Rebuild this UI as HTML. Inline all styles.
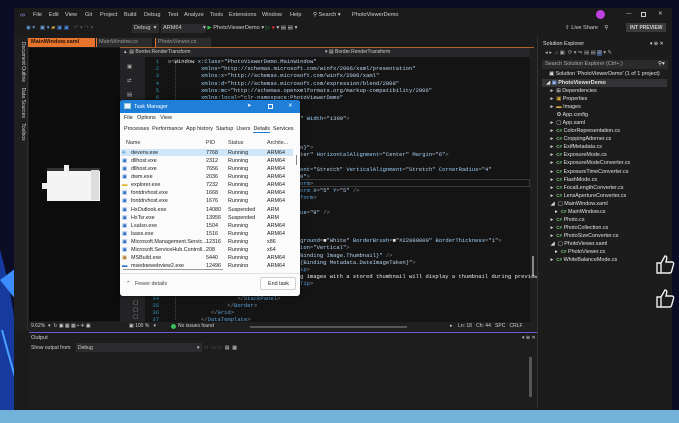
<!DOCTYPE html>
<html><head><meta charset="utf-8">
<style>
*{margin:0;padding:0;box-sizing:border-box}
body{width:679px;height:423px;overflow:hidden;background:#0b0d26;font-family:"Liberation Sans",sans-serif;position:relative;color:#ddd}
.a{position:absolute;white-space:nowrap}
.ui{font-size:5.6px;color:#d0d0d0}
.code{font-family:"Liberation Mono",monospace;font-size:5.5px;line-height:7px}
.t{color:#5a9fd8}.at{color:#9ccff5}.v{color:#b9d3ee}.p{color:#8a8a8a}.w{color:#e8e8e8}
.ln{color:#2b91af;font-family:"Liberation Mono",monospace;font-size:5.5px;text-align:right;width:14px}
.tm{font-size:5.4px;color:#222}
.se{font-size:5.4px;color:#e0e0e0}
.cs{color:#7cc77c;font-size:4.6px;font-weight:bold}
</style></head><body>
<!-- wallpaper swirl left -->
<svg class="a" style="left:0;top:0" width="16" height="423"><path d="M0 250 Q14 300 16 340 L16 410 L0 410Z" fill="#1b4fd0" opacity=".7"/><path d="M0 280 L16 268 L16 300 Z" fill="#3b8cff"/><path d="M2 330 Q10 360 16 380" stroke="#4aa0ff" stroke-width="2" fill="none"/></svg>
<!-- VS window -->
<div class="a" style="left:14px;top:8px;width:658px;height:402px;background:#1b1b1c"></div>
<!-- menu -->
<div class="a ui" style="left:20px;top:12px;color:#9b8ce8;font-size:7px">∞</div>
<div class="a ui" style="left:33px;top:12px">File</div>
<div class="a ui" style="left:49px;top:12px">Edit</div>
<div class="a ui" style="left:65px;top:12px">View</div>
<div class="a ui" style="left:85px;top:12px">Git</div>
<div class="a ui" style="left:100px;top:12px">Project</div>
<div class="a ui" style="left:124px;top:12px">Build</div>
<div class="a ui" style="left:144px;top:12px">Debug</div>
<div class="a ui" style="left:168px;top:12px">Test</div>
<div class="a ui" style="left:184px;top:12px">Analyze</div>
<div class="a ui" style="left:210px;top:12px">Tools</div>
<div class="a ui" style="left:229px;top:12px">Extensions</div>
<div class="a ui" style="left:262px;top:12px">Window</div>
<div class="a ui" style="left:290px;top:12px">Help</div>
<div class="a ui" style="left:313px;top:12px">⚲ Search ▾</div>
<div class="a ui" style="left:352px;top:12px">PhotoViewerDemo</div>
<div class="a" style="left:596px;top:10px;width:9px;height:9px;border-radius:50%;background:#c040e0"></div>
<div class="a ui" style="left:626px;top:11px">—</div>
<div class="a" style="left:641px;top:12px;width:5px;height:5px;border:1px solid #ccc"></div>
<div class="a ui" style="left:658px;top:11px">✕</div>
<!-- toolbar -->
<div class="a ui" style="left:26px;top:25px;color:#6aa0e0">◉ ▾ &nbsp; ▣ ▾ <span style="color:#d8a040">▰</span> <span style="color:#4a8ae0">▣ ▣</span> &nbsp; <span style="color:#555">↶ ▾ ↷ ▾</span></div>
<div class="a" style="left:132px;top:24px;width:27px;height:9px;background:#2c2c2e"></div>
<div class="a ui" style="left:134px;top:25px">Debug &nbsp;▾</div>
<div class="a" style="left:161px;top:24px;width:45px;height:9px;background:#2c2c2e"></div>
<div class="a ui" style="left:163px;top:25px">ARM64</div>
<div class="a ui" style="left:203px;top:25px">▾ <span style="color:#3cc04a">▶</span> PhotoViewerDemo ▾ <span style="color:#3cc04a">▷</span> <span style="color:#e03030">●</span> ▾ <span style="color:#ccc">▤ ▤ ▾</span></div>
<div class="a ui" style="left:565px;top:25px">⇪ Live Share &nbsp;&nbsp; ⚲</div>
<div class="a" style="left:626px;top:23px;width:40px;height:9px;background:#3a3a3c"></div>
<div class="a ui" style="left:630px;top:25px;font-size:5px;font-weight:bold">INT PREVIEW</div>
<!-- left strip -->
<div class="a" style="left:14px;top:36px;width:14px;height:295px;background:#1f1f20;border-right:1px solid #2e2e2e"></div>
<div class="a ui" style="left:12px;top:42px;transform-origin:0 0;transform:rotate(90deg) translateY(-14px);font-size:5px">Document Outline &nbsp;&nbsp; Data Sources &nbsp;&nbsp; Toolbox</div>
<!-- tabs -->
<div class="a" style="left:28px;top:38px;width:67px;height:9px;background:#e7742c"></div>
<div class="a ui" style="left:31px;top:39px;color:#231206;font-weight:bold">MainWindow.xaml</div>
<div class="a" style="left:96px;top:38px;width:56px;height:9px;background:#2c2c2c;border-left:1px solid #e7742c"></div>
<div class="a ui" style="left:99px;top:39px;color:#999">MainWindow.cs</div>
<div class="a" style="left:155px;top:38px;width:56px;height:9px;background:#2c2c2c;border-left:1px solid #e7742c"></div>
<div class="a ui" style="left:158px;top:39px;color:#999">PhotoViewer.cs</div>
<div class="a" style="left:120px;top:47px;width:414px;height:1px;background:#b0622a"></div>
<!-- designer -->
<div class="a" style="left:29px;top:48px;width:91px;height:273px;background:#0c0c0c"></div>
<div class="a" style="left:47px;top:168px;width:53px;height:33px;background:#f4f4f4;border-top:3px solid #333"></div>
<div class="a" style="left:91px;top:170px;width:8px;height:30px;background:#ddd"></div>
<div class="a" style="left:64px;top:165px;width:5px;height:7px;background:#eee"></div>
<div class="a" style="left:42px;top:183px;width:6px;height:6px;background:#eee"></div>
<!-- editor -->
<div class="a" style="left:120px;top:48px;width:25px;height:274px;background:#232325"></div>
<div class="a ui" style="left:127px;top:60px;line-height:14px;color:#aaa">▣<br>⇄<br>▤<br>⊠</div>
<div class="a ui" style="left:133px;top:300px;line-height:7px;color:#aaa">▢<br>▢<br>▢</div>
<div class="a" style="left:145px;top:48px;width:385px;height:274px;background:#141414"></div>
<div class="a" style="left:120px;top:48px;width:410px;height:9px;background:#262628"></div>
<div class="a ui" style="left:124px;top:49px;font-size:5px">▴ &nbsp;▤ Border.RenderTransform</div>
<div class="a ui" style="left:325px;top:49px;font-size:5px">▾ ▤ Border.RenderTransform</div>
<div class="a" style="left:530px;top:48px;width:7px;height:274px;background:#1e1e1e"></div>
<div class="a" style="left:532px;top:256px;width:2px;height:20px;background:#888"></div>
<div class="a" style="left:176px;top:179px;width:354px;height:8px;border:1px solid #3a3a3a"></div>
<div class="a" style="left:175px;top:62px;width:1px;height:258px;border-left:1px dotted #444"></div>
<div class="a ln" style="left:145px;top:58px;line-height:7.17px">1<br>2<br>3<br>4<br>5<br>6<br>7<br>8<br>9<br>10<br>11<br>12<br>13<br>14<br>15<br>16<br>17<br>18<br>19<br>20<br>21<br>22<br>23<br>24<br>25<br>26<br>27<br>28<br>29<br>30<br>31<br>32<br>33<br>34<br>35<br>36<br>37</div>
<div class="a code" style="left:168px;top:58px;line-height:7.17px">
<span class="p">⊟</span><span class="p">&lt;</span><span class="w">Window</span> <span class="at">x:Class</span><span class="p">=</span><span class="v">"PhotoViewerDemo.MainWindow"</span><br>
&nbsp;&nbsp;&nbsp;&nbsp;&nbsp;&nbsp;&nbsp;&nbsp;&nbsp;&nbsp;<span class="at">xmlns</span><span class="p">=</span><span class="v">"http://schemas.microsoft.com/winfx/2006/xaml/presentation"</span><br>
&nbsp;&nbsp;&nbsp;&nbsp;&nbsp;&nbsp;&nbsp;&nbsp;&nbsp;&nbsp;<span class="at">xmlns:x</span><span class="p">=</span><span class="v">"http://schemas.microsoft.com/winfx/2006/xaml"</span><br>
&nbsp;&nbsp;&nbsp;&nbsp;&nbsp;&nbsp;&nbsp;&nbsp;&nbsp;&nbsp;<span class="at">xmlns:d</span><span class="p">=</span><span class="v">"http://schemas.microsoft.com/expression/blend/2008"</span><br>
&nbsp;&nbsp;&nbsp;&nbsp;&nbsp;&nbsp;&nbsp;&nbsp;&nbsp;&nbsp;<span class="at">xmlns:mc</span><span class="p">=</span><span class="v">"http://schemas.openxmlformats.org/markup-compatibility/2006"</span><br>
&nbsp;&nbsp;&nbsp;&nbsp;&nbsp;&nbsp;&nbsp;&nbsp;&nbsp;&nbsp;<span class="at">xmlns:local</span><span class="p">=</span><span class="v">"clr-namespace:PhotoViewerDemo"</span><br>
&nbsp;&nbsp;&nbsp;&nbsp;&nbsp;&nbsp;&nbsp;&nbsp;&nbsp;&nbsp;<span class="at">mc:Ignorable</span><span class="p">=</span><span class="v">"d"</span><br>
<br>
&nbsp;&nbsp;&nbsp;&nbsp;&nbsp;&nbsp;&nbsp;&nbsp;&nbsp;&nbsp;<span class="at">Title</span><span class="p">=</span><span class="v">"MainWindow"</span> <span class="at">Height</span><span class="p">=</span><span class="v">"450"</span> <span class="at">Width</span><span class="p">=</span><span class="v">"1300"</span><span class="p">&gt;</span><br>
&nbsp;&nbsp;&nbsp;&nbsp;<span class="p">&lt;</span><span class="t">Window.Resources</span><span class="p">&gt;</span><br>
<br>
&nbsp;&nbsp;&nbsp;&nbsp;&nbsp;&nbsp;&nbsp;&nbsp;<span class="p">&lt;</span><span class="t">DataTemplate</span><br>
&nbsp;&nbsp;&nbsp;&nbsp;&nbsp;&nbsp;&nbsp;&nbsp;&nbsp;&nbsp;&nbsp;&nbsp;<span class="at">DataType</span><span class="p">=</span><span class="v">"{x:Type local:Photo}"</span><span class="p">&gt;</span><br>
&nbsp;&nbsp;&nbsp;&nbsp;&nbsp;&nbsp;&nbsp;&nbsp;&nbsp;&nbsp;&nbsp;&nbsp;<span class="p">&lt;</span><span class="t">Grid</span> <span class="at">VerticalAlignment</span><span class="p">=</span><span class="v">"Center"</span> <span class="at">HorizontalAlignment</span><span class="p">=</span><span class="v">"Center"</span> <span class="at">Margin</span><span class="p">=</span><span class="v">"6"</span><span class="p">&gt;</span><br>
<br>
&nbsp;&nbsp;&nbsp;&nbsp;&nbsp;&nbsp;&nbsp;&nbsp;&nbsp;&nbsp;&nbsp;&nbsp;&nbsp;&nbsp;&nbsp;&nbsp;<span class="p">&lt;</span><span class="t">Border</span> <span class="at">HorizontalAlignment</span><span class="p">=</span><span class="v">"Stretch"</span> <span class="at">VerticalAlignment</span><span class="p">=</span><span class="v">"Stretch"</span> <span class="at">CornerRadius</span><span class="p">=</span><span class="v">"4"</span><br>
&nbsp;&nbsp;&nbsp;&nbsp;&nbsp;&nbsp;&nbsp;&nbsp;&nbsp;&nbsp;&nbsp;&nbsp;&nbsp;&nbsp;&nbsp;&nbsp;&nbsp;&nbsp;&nbsp;&nbsp;<span class="at">Background</span><span class="p">=</span><span class="v">"#44000000"</span><span class="p">&gt;</span><br>
&nbsp;&nbsp;&nbsp;&nbsp;&nbsp;&nbsp;&nbsp;&nbsp;&nbsp;&nbsp;&nbsp;&nbsp;&nbsp;&nbsp;&nbsp;&nbsp;&nbsp;&nbsp;&nbsp;&nbsp;<span class="p">&lt;</span><span class="t">Border.RenderTransform</span><span class="p">&gt;</span><br>
&nbsp;&nbsp;&nbsp;&nbsp;&nbsp;&nbsp;&nbsp;&nbsp;&nbsp;&nbsp;&nbsp;&nbsp;&nbsp;&nbsp;&nbsp;&nbsp;&nbsp;&nbsp;&nbsp;&nbsp;&nbsp;&nbsp;&nbsp;&nbsp;<span class="p">&lt;</span><span class="t">TranslateTransform</span> <span class="at">X</span><span class="p">=</span><span class="v">"5"</span> <span class="at">Y</span><span class="p">=</span><span class="v">"5"</span> <span class="p">/&gt;</span><br>
&nbsp;&nbsp;&nbsp;&nbsp;&nbsp;&nbsp;&nbsp;&nbsp;&nbsp;&nbsp;&nbsp;&nbsp;&nbsp;&nbsp;&nbsp;&nbsp;&nbsp;&nbsp;&nbsp;&nbsp;<span class="p">&lt;/</span><span class="t">Border.RenderTransform</span><span class="p">&gt;</span><br>
&nbsp;&nbsp;&nbsp;&nbsp;&nbsp;&nbsp;&nbsp;&nbsp;&nbsp;&nbsp;&nbsp;&nbsp;&nbsp;&nbsp;&nbsp;&nbsp;&nbsp;&nbsp;&nbsp;&nbsp;<span class="p">&lt;</span><span class="t">Border.Effect</span><span class="p">&gt;</span><br>
&nbsp;&nbsp;&nbsp;&nbsp;&nbsp;&nbsp;&nbsp;&nbsp;&nbsp;&nbsp;&nbsp;&nbsp;&nbsp;&nbsp;&nbsp;&nbsp;&nbsp;&nbsp;&nbsp;&nbsp;&nbsp;&nbsp;&nbsp;&nbsp;<span class="p">&lt;</span><span class="t">BlurEffect</span> <span class="at">Radius</span><span class="p">=</span><span class="v">"8"</span> <span class="p">/&gt;</span><br>
&nbsp;&nbsp;&nbsp;&nbsp;&nbsp;&nbsp;&nbsp;&nbsp;&nbsp;&nbsp;&nbsp;&nbsp;&nbsp;&nbsp;&nbsp;&nbsp;&nbsp;&nbsp;&nbsp;&nbsp;<span class="p">&lt;/</span><span class="t">Border.Effect</span><span class="p">&gt;</span><br>
&nbsp;&nbsp;&nbsp;&nbsp;&nbsp;&nbsp;&nbsp;&nbsp;&nbsp;&nbsp;&nbsp;&nbsp;&nbsp;&nbsp;&nbsp;&nbsp;<span class="p">&lt;/</span><span class="t">Border</span><span class="p">&gt;</span><br>
<br>
&nbsp;&nbsp;&nbsp;&nbsp;&nbsp;&nbsp;&nbsp;&nbsp;&nbsp;&nbsp;&nbsp;&nbsp;&nbsp;&nbsp;&nbsp;&nbsp;<span class="p">&lt;</span><span class="t">Border</span> <span class="at">Padding</span><span class="p">=</span><span class="v">"4"</span> <span class="at">Background</span><span class="p">=</span><span class="w">■</span><span class="v">"White"</span> <span class="at">BorderBrush</span><span class="p">=</span><span class="w">■</span><span class="v">"#22000000"</span> <span class="at">BorderThickness</span><span class="p">=</span><span class="v">"1"</span><span class="p">&gt;</span><br>
&nbsp;&nbsp;&nbsp;&nbsp;&nbsp;&nbsp;&nbsp;&nbsp;&nbsp;&nbsp;&nbsp;&nbsp;&nbsp;&nbsp;&nbsp;&nbsp;&nbsp;&nbsp;&nbsp;&nbsp;<span class="p">&lt;</span><span class="t">StackPanel</span> <span class="at">Orientation</span><span class="p">=</span><span class="v">"Vertical"</span><span class="p">&gt;</span><br>
&nbsp;&nbsp;&nbsp;&nbsp;&nbsp;&nbsp;&nbsp;&nbsp;&nbsp;&nbsp;&nbsp;&nbsp;&nbsp;&nbsp;&nbsp;&nbsp;&nbsp;&nbsp;&nbsp;&nbsp;&nbsp;&nbsp;&nbsp;&nbsp;<span class="p">&lt;</span><span class="t">Image</span> <span class="at">Source</span><span class="p">=</span><span class="v">"{Binding Image.Thumbnail}"</span> <span class="p">/&gt;</span><br>
&nbsp;&nbsp;&nbsp;&nbsp;&nbsp;&nbsp;&nbsp;&nbsp;&nbsp;&nbsp;&nbsp;&nbsp;&nbsp;&nbsp;&nbsp;&nbsp;&nbsp;&nbsp;&nbsp;&nbsp;&nbsp;&nbsp;&nbsp;&nbsp;<span class="p">&lt;</span><span class="t">Label</span> <span class="at">Content</span><span class="p">=</span><span class="v">"{Binding Metadata.DateImageTaken}"</span><span class="p">&gt;</span><br>
&nbsp;&nbsp;&nbsp;&nbsp;&nbsp;&nbsp;&nbsp;&nbsp;&nbsp;&nbsp;&nbsp;&nbsp;&nbsp;&nbsp;&nbsp;&nbsp;&nbsp;&nbsp;&nbsp;&nbsp;&nbsp;&nbsp;&nbsp;&nbsp;&nbsp;&nbsp;&nbsp;&nbsp;<span class="p">&lt;</span><span class="t">Label.ToolTip</span><span class="p">&gt;</span><br>
&nbsp;&nbsp;&nbsp;&nbsp;&nbsp;&nbsp;&nbsp;&nbsp;&nbsp;&nbsp;&nbsp;&nbsp;&nbsp;&nbsp;&nbsp;&nbsp;&nbsp;&nbsp;&nbsp;&nbsp;&nbsp;&nbsp;&nbsp;&nbsp;&nbsp;&nbsp;&nbsp;&nbsp;&nbsp;&nbsp;&nbsp;&nbsp;<span class="w">Only JPeg images with a stored thumbnail will display a thumbnail during preview.</span><br>
&nbsp;&nbsp;&nbsp;&nbsp;&nbsp;&nbsp;&nbsp;&nbsp;&nbsp;&nbsp;&nbsp;&nbsp;&nbsp;&nbsp;&nbsp;&nbsp;&nbsp;&nbsp;&nbsp;&nbsp;&nbsp;&nbsp;&nbsp;&nbsp;&nbsp;&nbsp;&nbsp;&nbsp;<span class="p">&lt;/</span><span class="t">Label.ToolTip</span><span class="p">&gt;</span><br>
&nbsp;&nbsp;&nbsp;&nbsp;&nbsp;&nbsp;&nbsp;&nbsp;&nbsp;&nbsp;&nbsp;&nbsp;&nbsp;&nbsp;&nbsp;&nbsp;&nbsp;&nbsp;&nbsp;&nbsp;&nbsp;&nbsp;&nbsp;&nbsp;<span class="p">&lt;/</span><span class="t">Label</span><span class="p">&gt;</span><br>
&nbsp;&nbsp;&nbsp;&nbsp;&nbsp;&nbsp;&nbsp;&nbsp;&nbsp;&nbsp;&nbsp;&nbsp;&nbsp;&nbsp;&nbsp;&nbsp;&nbsp;&nbsp;&nbsp;&nbsp;&nbsp;<span class="p">&lt;/</span><span class="t">StackPanel</span><span class="p">&gt;</span><br>
&nbsp;&nbsp;&nbsp;&nbsp;&nbsp;&nbsp;&nbsp;&nbsp;&nbsp;&nbsp;&nbsp;&nbsp;&nbsp;&nbsp;&nbsp;&nbsp;&nbsp;&nbsp;<span class="p">&lt;/</span><span class="t">Border</span><span class="p">&gt;</span><br>
&nbsp;&nbsp;&nbsp;&nbsp;&nbsp;&nbsp;&nbsp;&nbsp;&nbsp;&nbsp;&nbsp;&nbsp;&nbsp;<span class="p">&lt;/</span><span class="t">Grid</span><span class="p">&gt;</span><br>
&nbsp;&nbsp;&nbsp;&nbsp;&nbsp;&nbsp;&nbsp;&nbsp;&nbsp;&nbsp;<span class="p">&lt;/</span><span class="t">DataTemplate</span><span class="p">&gt;</span>
</div>
<div class="a" style="left:0;top:0;width:0"></div>
<!-- editor status bar -->
<div class="a" style="left:29px;top:322px;width:508px;height:10px;background:#1f1f20"></div>
<div class="a ui" style="left:31px;top:323px;font-size:5px">9.62% &nbsp;▾ &nbsp;↻ ▣ ▦ ▦ ▪ ✛ ▣</div>
<div class="a ui" style="left:129px;top:323px;font-size:5px">▣ 100 % &nbsp;&nbsp;▾</div>
<div class="a" style="left:171px;top:324px;width:5px;height:5px;border-radius:50%;background:#3cbf5a"></div>
<div class="a ui" style="left:178px;top:323px;font-size:5px">No issues found</div>
<div class="a" style="left:250px;top:326px;width:157px;height:2px;background:#555"></div>
<div class="a ui" style="left:450px;top:323px;font-size:5px">▸ &nbsp;&nbsp;&nbsp;Ln: 18 &nbsp;&nbsp;Ch: 44 &nbsp;&nbsp;SPC &nbsp;&nbsp;CRLF</div>
<!-- output -->
<div class="a" style="left:29px;top:332px;width:508px;height:1px;background:#6a5acd"></div>
<div class="a" style="left:29px;top:333px;width:508px;height:75px;background:#1d1d1e"></div>
<div class="a ui" style="left:31px;top:335px">Output</div>
<div class="a ui" style="left:522px;top:335px;font-size:5px">▾ ⊕ ✕</div>
<div class="a ui" style="left:31px;top:345px;font-size:5px">Show output from:</div>
<div class="a" style="left:76px;top:343px;width:126px;height:9px;background:#2c2c2e"></div>
<div class="a ui" style="left:78px;top:345px;font-size:5px">Debug</div>
<div class="a ui" style="left:197px;top:345px;font-size:5px">▾ &nbsp;&nbsp;<span style="color:#666">▭ &nbsp;▭ ▭</span> &nbsp;▤ &nbsp;▦</div>
<div class="a" style="left:529px;top:357px;width:3px;height:40px;background:#555"></div>
<!-- solution explorer -->
<div class="a" style="left:537px;top:36px;width:135px;height:372px;background:#1c1c1d;border-left:1px solid #333"></div>
<div class="a se" style="left:543px;top:41px">Solution Explorer</div>
<div class="a se" style="left:650px;top:41px;font-size:5px">▾ ⊕ ✕</div>
<div class="a se" style="left:545px;top:50px;color:#aaa">◂ ▸ &nbsp;⌂ ▣ &nbsp;⟳ ▾ ≒ ▤ ▤ <span style="background:#3b4d7a">⊘</span> ▾ ✎</div>
<div class="a" style="left:542px;top:60px;width:126px;height:9px;background:#2a2a2c"></div>
<div class="a se" style="left:545px;top:61px;color:#aaa">Search Solution Explorer (Ctrl+;)</div>
<div class="a se" style="left:658px;top:61px">⚲▾</div>
<div class="a se" style="left:549px;top:71px">▣ Solution 'PhotoViewerDemo' (1 of 1 project)</div>
<div class="a" style="left:542px;top:79px;width:125px;height:8px;background:#343436"></div>
<div class="a se" style="left:546px;top:79px;line-height:8.05px">
◢ <span style="color:#9bf">▣</span> <b>PhotoViewerDemo</b><br>
&nbsp;&nbsp;&nbsp;▸ &nbsp;⊞ Dependencies<br>
&nbsp;&nbsp;&nbsp;▸ &nbsp;<span style="color:#d8b040">▣</span> Properties<br>
&nbsp;&nbsp;&nbsp;▸ &nbsp;<span style="color:#d8b040">▬</span> Images<br>
&nbsp;&nbsp;&nbsp;&nbsp;&nbsp;&nbsp;&nbsp;⚙ App.config<br>
&nbsp;&nbsp;&nbsp;▸ &nbsp;▢ App.xaml<br>
&nbsp;&nbsp;&nbsp;▸ &nbsp;<span class="cs">C#</span> ColorRepresentation.cs<br>
&nbsp;&nbsp;&nbsp;▸ &nbsp;<span class="cs">C#</span> CroppingAdorner.cs<br>
&nbsp;&nbsp;&nbsp;▸ &nbsp;<span class="cs">C#</span> ExifMetadata.cs<br>
&nbsp;&nbsp;&nbsp;▸ &nbsp;<span class="cs">C#</span> ExposureMode.cs<br>
&nbsp;&nbsp;&nbsp;▸ &nbsp;<span class="cs">C#</span> ExposureModeConverter.cs<br>
&nbsp;&nbsp;&nbsp;▸ &nbsp;<span class="cs">C#</span> ExposureTimeConverter.cs<br>
&nbsp;&nbsp;&nbsp;▸ &nbsp;<span class="cs">C#</span> FlashMode.cs<br>
&nbsp;&nbsp;&nbsp;▸ &nbsp;<span class="cs">C#</span> FocalLengthConverter.cs<br>
&nbsp;&nbsp;&nbsp;▸ &nbsp;<span class="cs">C#</span> LensApertureConverter.cs<br>
&nbsp;&nbsp;&nbsp;◢ &nbsp;▢ MainWindow.xaml<br>
&nbsp;&nbsp;&nbsp;&nbsp;&nbsp;&nbsp;▸ &nbsp;<span class="cs">C#</span> MainWindow.cs<br>
&nbsp;&nbsp;&nbsp;▸ &nbsp;<span class="cs">C#</span> Photo.cs<br>
&nbsp;&nbsp;&nbsp;▸ &nbsp;<span class="cs">C#</span> PhotoCollection.cs<br>
&nbsp;&nbsp;&nbsp;▸ &nbsp;<span class="cs">C#</span> PhotoSizeConverter.cs<br>
&nbsp;&nbsp;&nbsp;◢ &nbsp;▢ PhotoViewer.xaml<br>
&nbsp;&nbsp;&nbsp;&nbsp;&nbsp;&nbsp;▸ &nbsp;<span class="cs">C#</span> PhotoViewer.cs<br>
&nbsp;&nbsp;&nbsp;▸ &nbsp;<span class="cs">C#</span> WhiteBalanceMode.cs
</div>
<!-- thumbs up -->
<svg class="a" style="left:655px;top:253px" width="20" height="22" viewBox="0 0 20 22"><path d="M2 10h4v10H2zM6 10l4-7c2 0 2 2 1.5 4L11 9h6c1.5 0 2 1.5 1.5 2.5l-2 7c-.3 1-1 1.5-2 1.5H6" fill="none" stroke="#eee" stroke-width="1.4"/></svg>
<svg class="a" style="left:655px;top:287px" width="20" height="22" viewBox="0 0 20 22"><path d="M2 10h4v10H2zM6 10l4-7c2 0 2 2 1.5 4L11 9h6c1.5 0 2 1.5 1.5 2.5l-2 7c-.3 1-1 1.5-2 1.5H6" fill="none" stroke="#eee" stroke-width="1.4"/></svg>
<!-- bottom strip -->
<div class="a" style="left:0;top:410px;width:679px;height:13px;background:#72b2d8"></div>
<!-- Task manager -->
<div class="a" style="left:120px;top:100px;width:180px;height:196px;background:#fbfbfb;border-radius:3px;box-shadow:0 0 4px rgba(0,0,0,.6)"></div>
<div class="a" style="left:120px;top:100px;width:180px;height:13px;background:#1f7fd8;border-radius:3px 3px 0 0"></div>
<div class="a" style="left:124px;top:103px;width:7px;height:6px;background:#e8f2ff;border:1px solid #9cc"></div>
<div class="a tm" style="left:134px;top:104px;color:#fff">Task Manager</div>
<div class="a tm" style="left:247px;top:103px;color:#fff">➤</div>
<div class="a" style="left:268px;top:104px;width:5px;height:5px;border:1px solid #fff"></div>
<div class="a tm" style="left:288px;top:103px;color:#fff">✕</div>
<div class="a tm" style="left:124px;top:115px">File &nbsp;&nbsp;Options &nbsp;&nbsp;View</div>
<div class="a tm" style="left:124px;top:126px">Processes &nbsp;Performance &nbsp;App history &nbsp;Startup &nbsp;Users &nbsp;<span style="border-bottom:1px solid #1f7fd8">Details</span> &nbsp;Services</div>
<div class="a tm" style="left:126px;top:140px;color:#333">Name</div>
<div class="a tm" style="left:206px;top:140px;color:#333">PID</div>
<div class="a tm" style="left:228px;top:140px;color:#333">Status</div>
<div class="a tm" style="left:267px;top:140px;color:#333">Archite...</div>
<div class="a" style="left:121px;top:149px;width:172px;height:7px;background:#cfe6f8"></div>
<div class="a" style="left:296px;top:155px;width:1px;height:10px;background:#888"></div>
<div class="a tm" style="left:122px;top:149px;line-height:8.08px;width:10px;color:#2a6fc8">⟡<br>▣<br>▣<br>▣<br><span style="color:#e0b020">▬</span><br>▣<br>▣<br>▣<br>▣<br>▣<br>▣<br>▣<br>▣<br><span style="color:#b08030">▣</span><br>▬</div>
<div class="a tm" style="left:131px;top:149px;line-height:8.08px">devenv.exe<br>dllhost.exe<br>dllhost.exe<br>dwm.exe<br>explorer.exe<br>fontdrvhost.exe<br>fontdrvhost.exe<br>HxOutlook.exe<br>HxTsr.exe<br>LsaIso.exe<br>lsass.exe<br>Microsoft.Management.Servic...<br>Microsoft.ServiceHub.Controll...<br>MSBuild.exe<br>msedgewebview2.exe</div>
<div class="a tm" style="left:206px;top:149px;line-height:8.08px">7768<br>2312<br>7656<br>2036<br>7232<br>1668<br>1676<br>14080<br>13956<br>1504<br>1516<br>12316<br>208<br>5440<br>12496</div>
<div class="a tm" style="left:228px;top:149px;line-height:8.08px">Running<br>Running<br>Running<br>Running<br>Running<br>Running<br>Running<br>Suspended<br>Suspended<br>Running<br>Running<br>Running<br>Running<br>Running<br>Running</div>
<div class="a tm" style="left:267px;top:149px;line-height:8.08px">ARM64<br>ARM64<br>ARM64<br>ARM64<br>ARM64<br>ARM64<br>ARM64<br>ARM<br>ARM<br>ARM64<br>ARM64<br>x86<br>x64<br>ARM64<br>ARM64</div>
<div class="a" style="left:121px;top:267px;width:178px;height:6px;background:#fbfbfb"></div>
<div class="a" style="left:123px;top:269px;width:100px;height:1px;background:#999"></div>
<div class="a" style="left:120px;top:273px;width:180px;height:1px;background:#e4e4e4"></div>
<div class="a tm" style="left:126px;top:281px;color:#444">⌃ &nbsp;&nbsp;Fewer details</div>
<div class="a" style="left:260px;top:277px;width:36px;height:13px;background:#fdfdfd;border:1px solid #d0d0d0;border-radius:2px"></div>
<div class="a tm" style="left:268px;top:281px">End task</div>
</body></html>
